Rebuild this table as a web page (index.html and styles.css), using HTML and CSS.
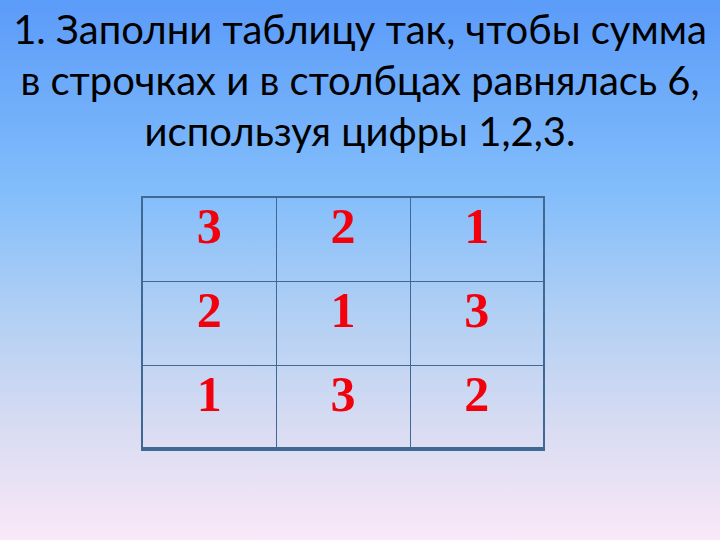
FILE: index.html
```html
<!DOCTYPE html>
<html lang="ru">
<head>
<meta charset="utf-8">
<link rel="stylesheet" href="styles.css">
</head>
<body>
<div class="slide">
  <h1 class="title">1. Заполни таблицу так, чтобы сумма<br>в строчках и в столбцах равнялась 6,<br>используя цифры 1,2,3.</h1>
  <table class="grid">
    <tr><td>3</td><td>2</td><td>1</td></tr>
    <tr><td>2</td><td>1</td><td>3</td></tr>
    <tr><td>1</td><td>3</td><td>2</td></tr>
  </table>
</div>
</body>
</html>
```
FILE: styles.css
```css
html, body {
  margin: 0;
  padding: 0;
}
body {
  width: 720px;
  height: 540px;
  overflow: hidden;
  background: linear-gradient(to bottom, #5b9bf9 0px, #82bdfb 190px, #b0cff4 310px, #d9dcf2 430px, #fae8f8 540px);
}
.slide {
  display: flex;
  flex-direction: column;
  align-items: flex-start;
  padding-top: 4px;
}
.title {
  align-self: stretch;
  margin: 0;
  font-family: Lato, "Noto Sans", sans-serif;
  font-weight: normal;
  font-size: 40px;
  line-height: 51px;
  color: #000;
  text-align: center;
  white-space: nowrap;
}
.grid {
  margin: 39px 0 0 141px;
  border-collapse: collapse;
  border-top: 2px solid #3f6894;
  border-left: 2px solid #3f6894;
  border-right: 2px solid #3f6894;
  border-bottom: 4px solid #3f6894;
}
.grid td {
  width: 134px;
  height: 84px;
  padding: 0;
  border: 1px solid #3f6894;
  text-align: center;
  vertical-align: top;
  font-family: "Liberation Serif", "Times New Roman", serif;
  font-weight: bold;
  font-size: 50px;
  line-height: 56px;
  color: #f2000c;
  box-sizing: border-box;
}
```
